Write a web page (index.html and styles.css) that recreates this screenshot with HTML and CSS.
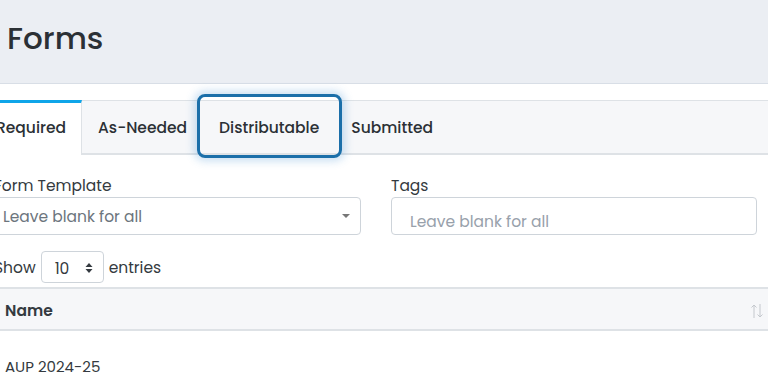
FILE: index.html
```html
<!DOCTYPE html>
<html lang="en">
<head>
  <meta charset="UTF-8" />
  <meta name="viewport" content="width=device-width, initial-scale=1.0"/>
  <title>Forms</title>
  <link rel="stylesheet" href="styles.css">
</head>
<body>

  <header class="page-head">
    <h1>Forms</h1>
  </header>

  <nav class="tabs">
    <button class="tab active">Required</button>
    <button class="tab">As-Needed</button>
    <button class="tab focused">Distributable</button>
    <button class="tab">Submitted</button>
  </nav>

  <div class="panel">
    <div class="filters">
      <div class="field">
        <label>Form Template</label>
        <div class="select-box">
          <span>Leave blank for all</span>
          <span class="caret"></span>
        </div>
      </div>
      <div class="field">
        <label>Tags</label>
        <div class="tag-box">Leave blank for all</div>
      </div>
    </div>

    <div class="length">
      Show
      <span class="length-select">10
        <svg width="8" height="12" viewBox="0 0 8 12"><path d="M4 1 L7.5 5 H0.5 Z M4 11 L7.5 7 H0.5 Z" fill="#343a40"/></svg>
      </span>
      entries
    </div>

    <table class="grid">
      <thead>
        <tr>
          <th>Name
            <svg class="sort" width="14" height="16" viewBox="0 0 14 16"><path d="M4 15 V2 M1.5 4.5 L4 2 L6.5 4.5 M10 1 V14 M7.5 11.5 L10 14 L12.5 11.5" stroke="#c4c8cd" stroke-width="1" fill="none"/></svg>
          </th>
        </tr>
      </thead>
      <tbody>
        <tr><td>AUP 2024-25</td></tr>
      </tbody>
    </table>
  </div>

</body>
</html>
```

FILE: styles.css
```css
* {
  box-sizing: border-box;
}
body {
  font-family: 'Poppins', 'Open Sans', sans-serif;
  margin: 0;
  background: #fff;
  color: #343a40;
  overflow: hidden;
}
.page-head {
  background: #ebeef3;
  border-bottom: 1px solid #d8dee6;
  height: 84px;
  padding: 15px 7px 0;
}
.page-head h1 {
  margin: 0;
  font-size: 31px;
  font-weight: 500;
  color: #2b3035;
}
.tabs {
  display: flex;
  margin: 16px 0 0 -50px;
  height: 55px;
  background: #f6f7f9;
  border-top: 1px solid #dee2e6;
  border-bottom: 2px solid #dee2e6;
}
.tab {
  position: relative;
  font-family: inherit;
  font-size: 15.5px;
  font-weight: 500;
  color: #2b3035;
  background: none;
  border: none;
  padding: 0 16px;
  cursor: pointer;
}
.tab.active {
  background: #fff;
  border-top: 3px solid #0ea5e9;
  border-right: 1px solid #dee2e6;
  padding: 0 15px 3px 46px;
  margin-top: -1px;
  margin-bottom: -2px;
}
.tab.focused::after {
  content: "";
  position: absolute;
  top: -7px;
  bottom: -5px;
  left: -6px;
  right: -7px;
  border: 3px solid #1b6fa9;
  border-radius: 8px;
  box-shadow: 0 0 8px 3px rgba(60, 140, 210, 0.28);
}
.panel {
  margin-left: -6px;
  padding-right: 11px;
}
.filters {
  display: grid;
  grid-template-columns: 367px 1fr;
  gap: 30px;
  margin-top: 19px;
}
.field label {
  display: block;
  font-size: 15.5px;
  margin-bottom: 0;
}
.select-box, .tag-box {
  height: 38px;
  border: 1px solid #ced4da;
  border-radius: 4px;
  display: flex;
  align-items: center;
  font-size: 15.5px;
  color: #6c757d;
}
.select-box {
  padding: 0 10px 0 8px;
  justify-content: space-between;
}
.caret {
  border-left: 4px solid transparent;
  border-right: 4px solid transparent;
  border-top: 4px solid #777;
}
.tag-box {
  padding: 10px 18px 0;
  color: #98a1ab;
}
.length {
  margin-top: 16px;
  font-size: 15.5px;
  display: flex;
  align-items: center;
  gap: 5px;
}
.length-select {
  display: inline-flex;
  align-items: center;
  justify-content: space-between;
  width: 63px;
  height: 32px;
  padding: 2px 10px 0 13px;
  border: 1px solid #ced4da;
  border-radius: 4px;
}
.grid {
  width: calc(100% + 11px);
  border-collapse: collapse;
  margin-top: 4px;
}
.grid th {
  position: relative;
  text-align: left;
  font-size: 15.5px;
  font-weight: 600;
  height: 42px;
  padding: 2px 11px 0;
  background: #f6f7f9;
  border-top: 2px solid #dee2e6;
  border-bottom: 2px solid #dee2e6;
}
.sort {
  position: absolute;
  right: 4px;
  top: 14px;
}
.grid td {
  font-size: 15px;
  padding: 24px 11px 0;
}
```
